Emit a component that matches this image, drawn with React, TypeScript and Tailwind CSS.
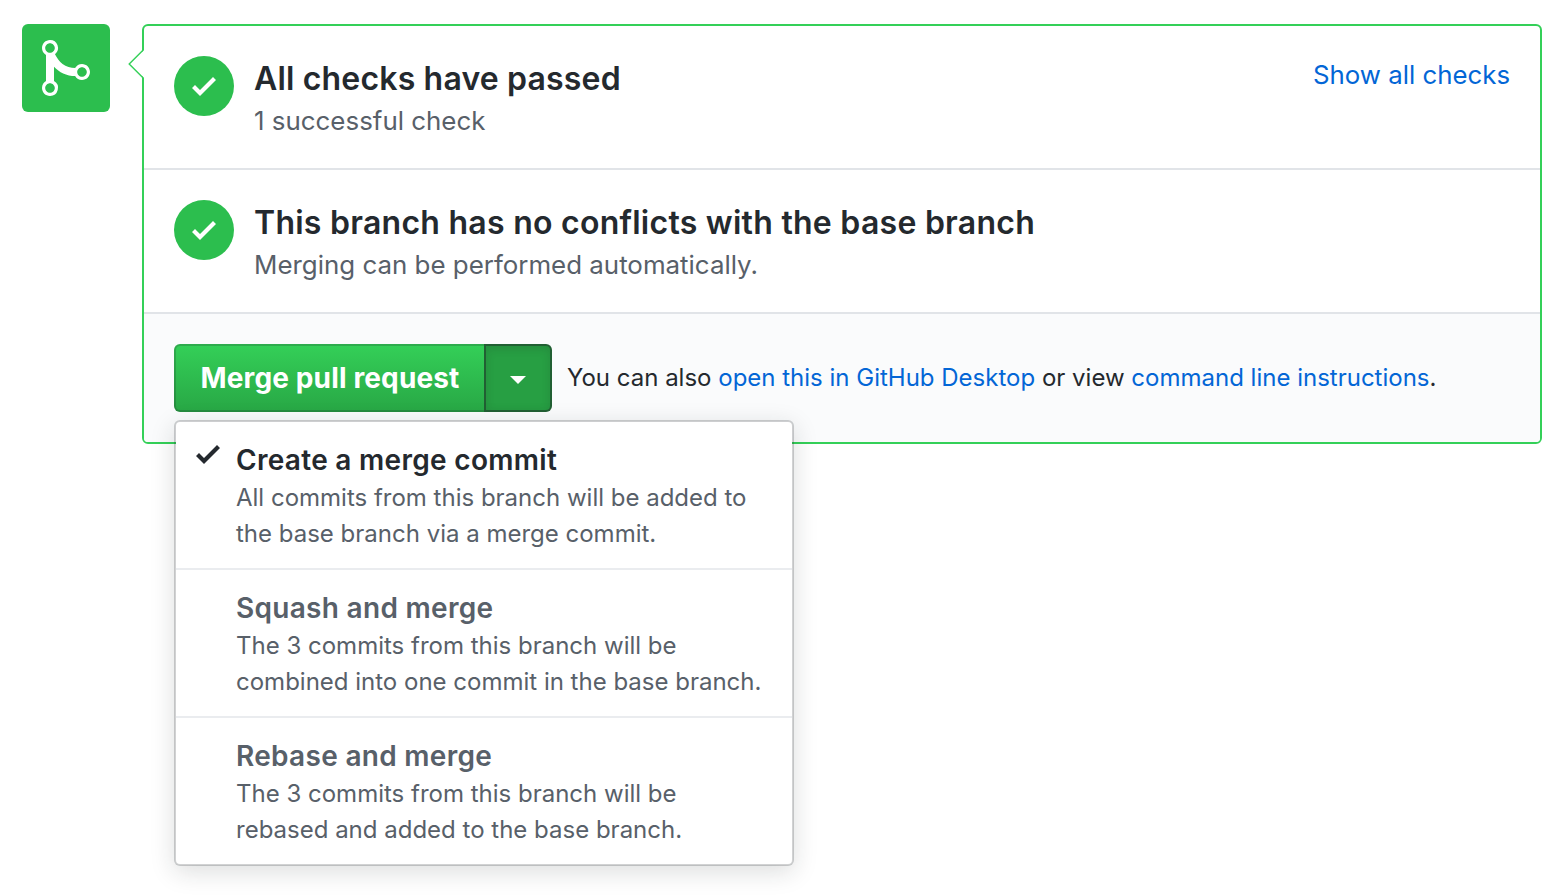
import type { ReactNode } from "react";

const CHECK = "M12 5l-8 8-4-4 1.5-1.5L4 10l6.5-6.5z";
const MERGE =
  "M10 7c-.73 0-1.38.41-1.73 1.02V8C7.22 7.98 6 7.64 5.14 6.98c-.75-.58-1.5-1.61-1.89-2.44A1.993 1.993 0 0 0 2 .99C.89.99 0 1.89 0 3a2 2 0 0 0 1 1.72v6.56c-.59.35-1 .99-1 1.72 0 1.11.89 2 2 2a1.993 1.993 0 0 0 1-3.72V7.67c.67.7 1.44 1.27 2.3 1.69.86.42 2.03.63 2.97.64v-.02c.36.61 1 1.02 1.73 1.02 1.11 0 2-.89 2-2 0-1.11-.89-2-2-2zm-6.8 6c0 .66-.55 1.2-1.2 1.2-.65 0-1.2-.55-1.2-1.2 0-.65.55-1.2 1.2-1.2.65 0 1.2.55 1.2 1.2zM2 4.2C1.34 4.2.8 3.65.8 3c0-.65.55-1.2 1.2-1.2.65 0 1.2.55 1.2 1.2 0 .65-.55 1.2-1.2 1.2zm8 6c-.66 0-1.2-.55-1.2-1.2 0-.65.55-1.2 1.2-1.2.65 0 1.2.55 1.2 1.2 0 .65-.55 1.2-1.2 1.2z";

function CheckIcon() {
  return (
    <svg className="h-8 w-6 shrink-0" viewBox="0 0 12 16" fill="currentColor">
      <path fillRule="evenodd" d={CHECK} />
    </svg>
  );
}

function StatusRow({ title, detail, action }: { title: ReactNode; detail: ReactNode; action?: ReactNode }) {
  return (
    <section className="flex h-36 border-b-2 border-[#e1e4e8] px-[30px] pt-[30px]">
      <div className="flex h-[60px] w-[60px] shrink-0 items-center justify-center rounded-full bg-[#2cbe4e] text-white">
        <CheckIcon />
      </div>
      <div className="ml-5 flex-1 whitespace-nowrap">
        <h4 className="h-[45px] text-[32px] leading-[46px] font-semibold">{title}</h4>
        <p className="h-10 text-[25.9px] leading-10 text-[#586069]">{detail}</p>
      </div>
      {action}
    </section>
  );
}

function MenuItem({ title, titleClass, lines, selected }: { title: string; titleClass: string; lines: ReactNode[]; selected?: boolean }) {
  return (
    <li className="flex h-[148px] border-b-2 border-[#eaecef] pl-5 pt-4 last:h-[146px] last:border-b-0">
      <div className="w-10 shrink-0 text-[#24292e]">{selected && <CheckIcon />}</div>
      <div className="whitespace-nowrap">
        <div className={`h-[42px] text-[28px] leading-[44px] font-semibold tracking-[0.3px] ${titleClass}`}>{title}</div>
        <div className="text-[24px] leading-9 text-[#586069]">
          {lines.map((line, i) => (
            <div key={i}>{line}</div>
          ))}
        </div>
      </div>
    </li>
  );
}

export default function App() {
  return (
    <main className="flex h-[896px] w-[1564px] items-start overflow-hidden bg-white pt-6 pl-[22px] font-['Inter',sans-serif] text-[#24292e]">
      <div className="flex h-22 w-22 shrink-0 items-center justify-center rounded-[6px] bg-[#2cbe4e] text-white">
        <svg className="h-16 w-12" viewBox="0 0 12 16" fill="currentColor">
          <path fillRule="evenodd" d={MERGE} />
        </svg>
      </div>

      <div className="relative ml-8 h-[420px] w-[1400px] shrink-0 rounded-[6px] border-2 border-[#34d058] bg-white">
        <svg className="absolute top-[22px] -left-4 h-8 w-4" viewBox="0 0 16 32">
          <path d="M16 2 2 16 16 30z" fill="#fff" />
          <path d="M15.2 2 1.2 16 15.2 30" fill="none" stroke="#34d058" strokeWidth="1.4" />
        </svg>

        <StatusRow
          title={<span className="tracking-[0.17px]">All checks have passed</span>}
          detail="1 successful check"
          action={<a className="h-10 text-[25.8px] leading-[38px] whitespace-nowrap text-[#0366d6]">Show all checks</a>}
        />
        <StatusRow
          title={<span className="tracking-[0.26px]">This branch has no conflicts with the base branch</span>}
          detail="Merging can be performed automatically."
        />

        <section className="flex h-32 items-start rounded-b-[4px] bg-[#fafbfc] px-[30px] pt-[30px]">
          <div className="relative flex h-[68px] w-[378px] shrink-0">
            <button className="h-[68px] w-[310px] rounded-l-[6px] border-2 border-r-0 border-[#1b1f23]/20 bg-linear-to-b from-[#34d058] to-[#28a745] bg-origin-border text-[28px] leading-none font-bold tracking-[0.14px] whitespace-nowrap text-white">
              Merge pull request
            </button>
            <button className="flex h-[68px] w-[68px] items-center justify-center rounded-r-[6px] border-2 border-[#1b1f23]/50 bg-[#279f43] shadow-[inset_0_3px_8px_rgba(27,31,35,0.15)]">
              <svg className="mt-1 h-2 w-4" viewBox="0 0 16 8">
                <path d="M0 0h16L8 8z" fill="#fff" />
              </svg>
            </button>

            <ul className="absolute top-[76px] left-0 z-10 w-[620px] rounded-[6px] border-2 border-[#1b1f23]/20 bg-white bg-clip-padding shadow-[0_6px_24px_rgba(27,31,35,0.15)]">
              <MenuItem
                selected
                title="Create a merge commit"
                titleClass="text-[#24292e]"
                lines={["All commits from this branch will be added to", "the base branch via a merge commit."]}
              />
              <MenuItem
                title="Squash and merge"
                titleClass="text-[#586069]"
                lines={["The 3 commits from this branch will be", "combined into one commit in the base branch."]}
              />
              <MenuItem
                title="Rebase and merge"
                titleClass="text-[#586069]"
                lines={["The 3 commits from this branch will be", "rebased and added to the base branch."]}
              />
            </ul>
          </div>
          <p className="ml-[15px] text-[24px] leading-[68px] whitespace-nowrap">
            You can also <a className="text-[#0366d6]">open this in GitHub Desktop</a> or view{" "}
            <a className="text-[#0366d6]">command line instructions</a>.
          </p>
        </section>
      </div>
    </main>
  );
}
